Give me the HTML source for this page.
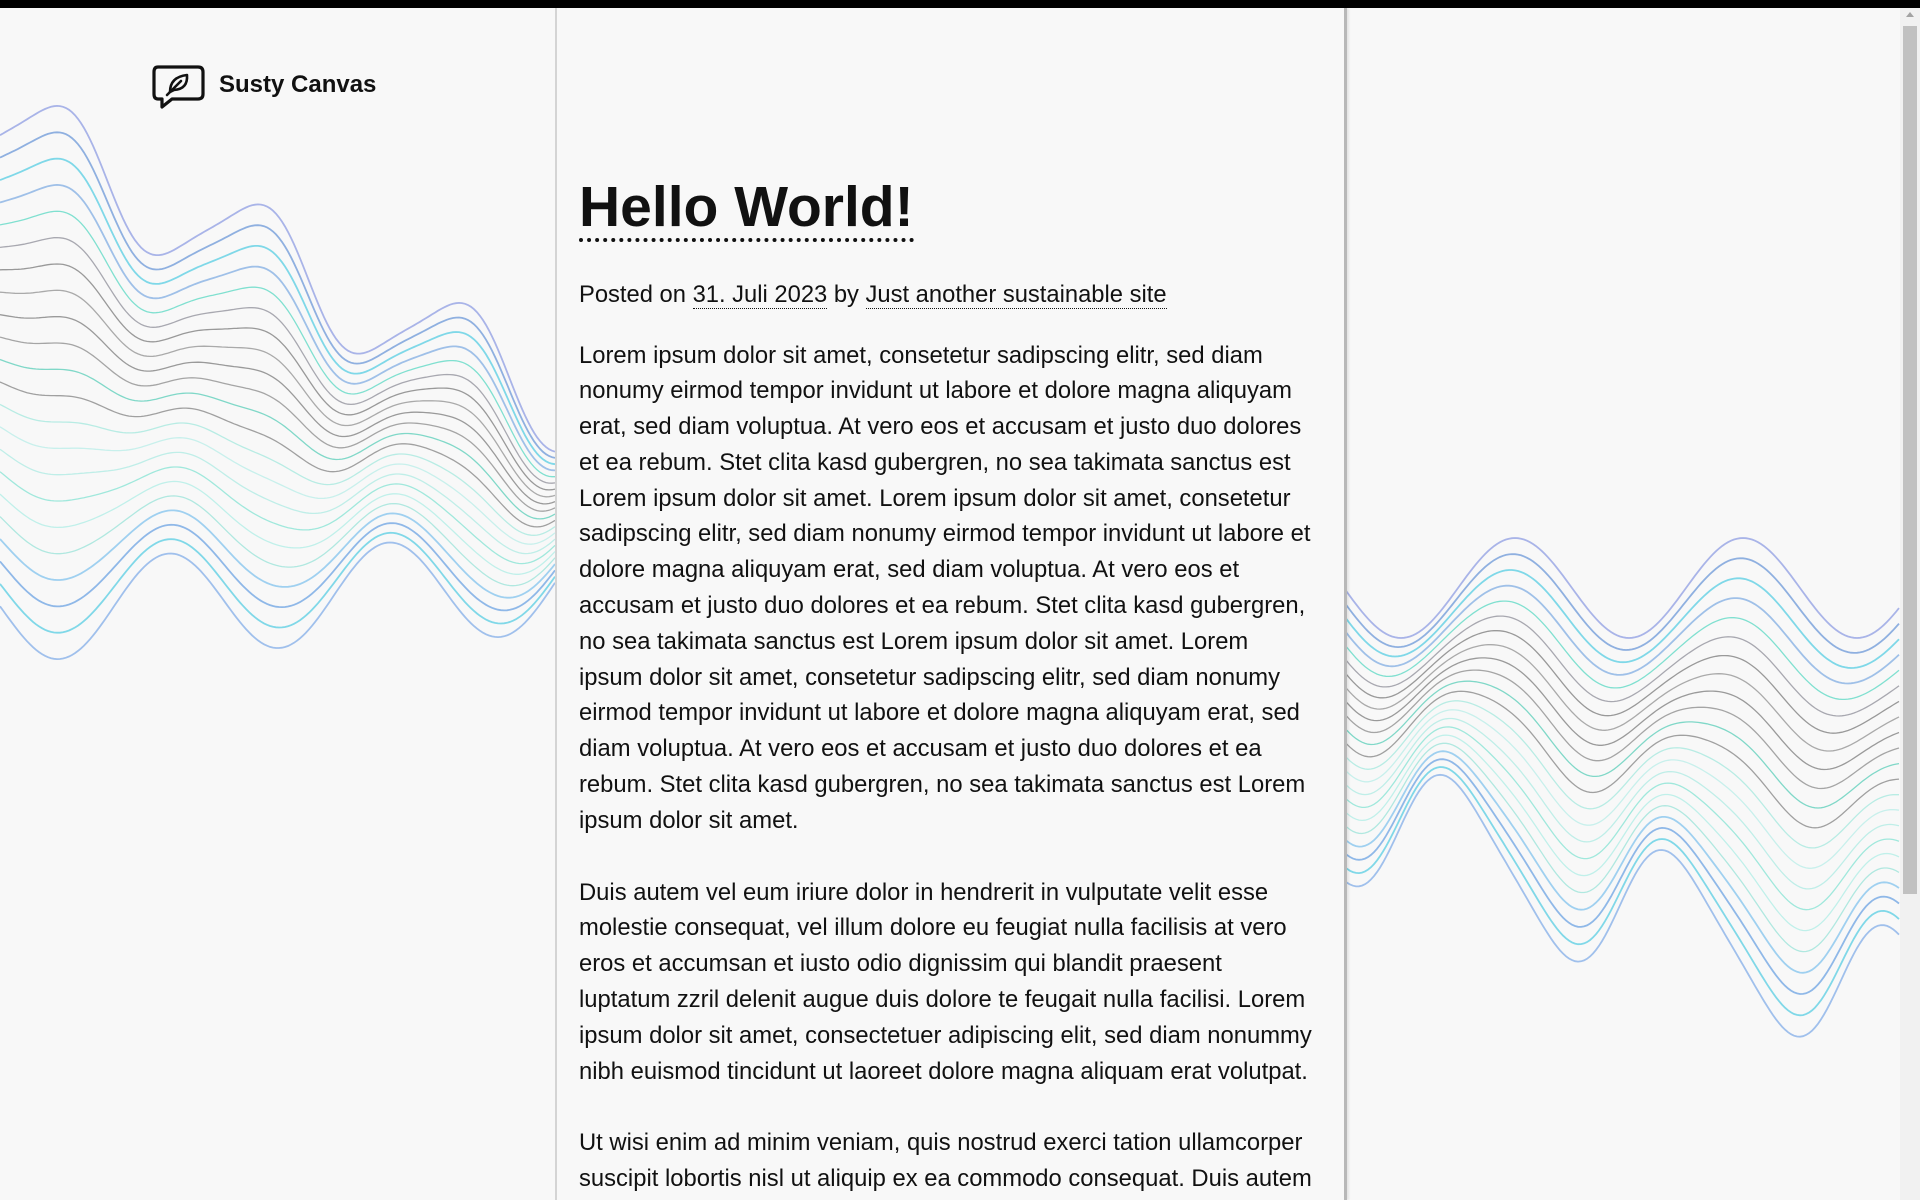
<!DOCTYPE html>
<html><head><meta charset="utf-8">
<style>
html,body{margin:0;padding:0;width:1920px;height:1200px;overflow:hidden;background:#f8f8f8;font-family:"Liberation Sans",Arial,sans-serif;color:#111}
#topbar{position:absolute;left:0;top:0;width:1920px;height:8px;background:#000}
#col{position:absolute;left:555px;top:8px;width:787px;height:1192px;border-left:2px solid #d4d4d4;border-right:3px solid #b8b8b8;box-shadow:2px 0 2px rgba(0,0,0,.08);background:#f8f8f8}
svg.w{position:absolute;top:0;left:0}
#logo{position:absolute;left:152px;top:65px}
#logotxt{position:absolute;left:219px;top:71px;font-weight:bold;font-size:24px;line-height:28px}
#clip{position:absolute;left:0;top:0;width:1920px;height:1200px;overflow:hidden}
#art{position:absolute;left:579px;top:176px;width:770px}
h1{margin:0;font-size:57px;font-weight:bold;display:inline-block;border-bottom:4px dotted #111;line-height:62px}
.meta{margin:35px 0 0;font-size:23.75px;line-height:35.5px}
.meta a{color:#111;text-decoration:none;border-bottom:1px dotted #111}
p{font-size:23.8px;line-height:35.8px;margin:0 0 36px;white-space:nowrap}
#sb{position:absolute;left:1900px;top:8px;width:20px;height:1192px;background:#f1f1f1}
#thumb{position:absolute;left:1903px;top:26px;width:14px;height:868px;background:#c1c1c1}
#arr{position:absolute;left:1906px;top:12px;width:0;height:0;border-left:4px solid transparent;border-right:4px solid transparent;border-bottom:5px solid #a3a3a3}
</style></head><body>
<div id="clip">
<svg class="w" width="1920" height="1200" id="waves"></svg>
<div id="topbar"></div>
<div id="col"></div>
<svg id="logo" width="54" height="44" viewBox="0 0 54 44">
<path d="M6 2 H46 Q51 2 51 7 V29 Q51 34 46 34 H20 L10 42 V34 H6 Q2 34 2 29 V7 Q2 2 6 2 Z" fill="none" stroke="#111" stroke-width="3.2" stroke-linejoin="round"/>
<path d="M18 27 Q18 12 35 10 Q36 24 22 25 Z" fill="none" stroke="#111" stroke-width="2.6" stroke-linejoin="round"/>
<path d="M15 30 L29 16" stroke="#111" stroke-width="2.6" stroke-linecap="round"/>
</svg>
<div id="logotxt">Susty Canvas</div>
<div id="art">
<h1>Hello World!</h1>
<div class="meta">Posted on <a>31. Juli 2023</a> by <a>Just another sustainable site</a></div>
<div style="height:25px"></div>
<p>Lorem ipsum dolor sit amet, consetetur sadipscing elitr, sed diam<br>nonumy eirmod tempor invidunt ut labore et dolore magna aliquyam<br>erat, sed diam voluptua. At vero eos et accusam et justo duo dolores<br>et ea rebum. Stet clita kasd gubergren, no sea takimata sanctus est<br>Lorem ipsum dolor sit amet. Lorem ipsum dolor sit amet, consetetur<br>sadipscing elitr, sed diam nonumy eirmod tempor invidunt ut labore et<br>dolore magna aliquyam erat, sed diam voluptua. At vero eos et<br>accusam et justo duo dolores et ea rebum. Stet clita kasd gubergren,<br>no sea takimata sanctus est Lorem ipsum dolor sit amet. Lorem<br>ipsum dolor sit amet, consetetur sadipscing elitr, sed diam nonumy<br>eirmod tempor invidunt ut labore et dolore magna aliquyam erat, sed<br>diam voluptua. At vero eos et accusam et justo duo dolores et ea<br>rebum. Stet clita kasd gubergren, no sea takimata sanctus est Lorem<br>ipsum dolor sit amet.</p>
<p>Duis autem vel eum iriure dolor in hendrerit in vulputate velit esse<br>molestie consequat, vel illum dolore eu feugiat nulla facilisis at vero<br>eros et accumsan et iusto odio dignissim qui blandit praesent<br>luptatum zzril delenit augue duis dolore te feugait nulla facilisi. Lorem<br>ipsum dolor sit amet, consectetuer adipiscing elit, sed diam nonummy<br>nibh euismod tincidunt ut laoreet dolore magna aliquam erat volutpat.</p>
<p>Ut wisi enim ad minim veniam, quis nostrud exerci tation ullamcorper<br>suscipit lobortis nisl ut aliquip ex ea commodo consequat. Duis autem</p>
</div>
<div id="sb"></div><div id="thumb"></div><div id="arr"></div>
</div>
<script>
(function(){
var svg=document.getElementById('waves'),ns='http://www.w3.org/2000/svg';
var pal=['#a9b4e8','#8fb0e0','#7fd8e8','#9fc0e8','#80e0d0','#a8a8b0','#999','#aaa','#9a9a9a','#a5a5a5','#80d8c8','#a0a0a0','#b8ece4','#c8f0ec','#bfeee8','#a0e8dc','#c0f0ea','#b0e8e0','#9fd0f0','#8fb8e8','#80d8e8','#a0c0ec'];
function draw(x0,x1,top,bot,n){
 for(var i=0;i<n;i++){
  var t=i/(n-1),d='';
  for(var x=x0;x<=x1;x+=3){
   var y=top(x)*(1-t)+bot(x)*t;
   d+=(x==x0?'M':'L')+x+' '+y.toFixed(1);
  }
  var p=document.createElementNS(ns,'path');
  p.setAttribute('d',d);p.setAttribute('fill','none');
  p.setAttribute('stroke',pal[i%pal.length]);
  p.setAttribute('stroke-width',(i<4||i>n-5)?1.8:1.3);
  svg.appendChild(p);
 }
}
var P=Math.PI*2;
draw(0,556,function(x){return 128+0.49*x-50*Math.cos(P*(x-57)/201)-8*Math.sin(P*(x-57)/100.5);},
 function(x){return 612-0.05*x+50*Math.cos(P*(x-59)/220);},22);
draw(1344,1900,function(x){return 588-50*Math.cos(P*(x-1515)/228);},
 function(x){return 812+0.34*(x-1344)-68*Math.cos(P*(x-1454)/221)+10*Math.sin(P*(x-1454)/110.5);},22);
})();
</script>
</body></html>
